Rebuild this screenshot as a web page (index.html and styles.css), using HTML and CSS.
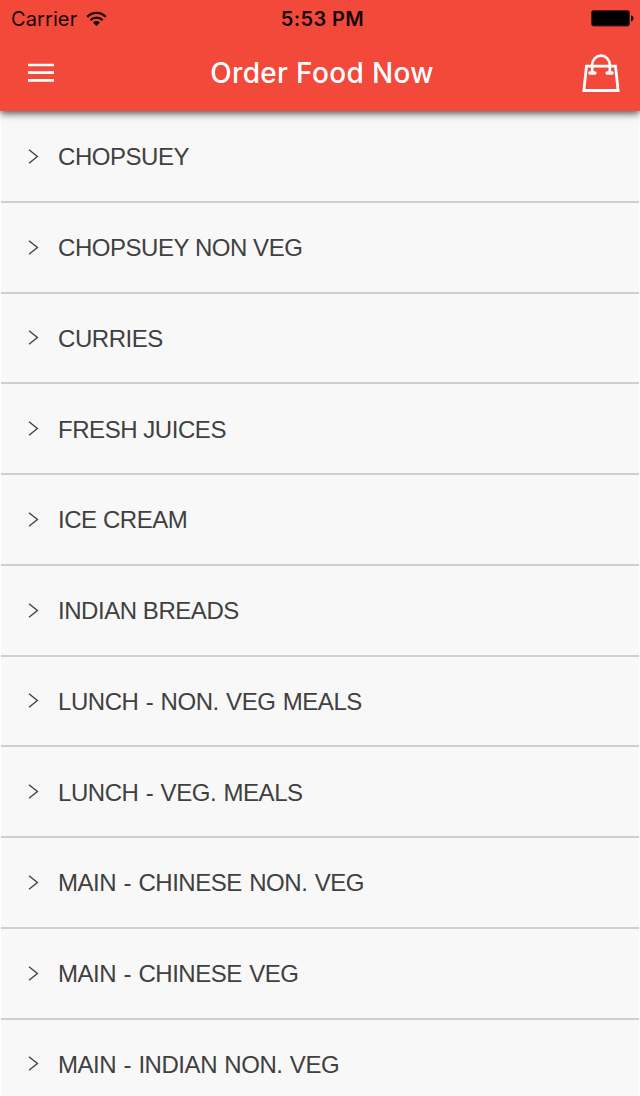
FILE: index.html
```html
<!DOCTYPE html>
<html lang="en">
<head>
    <meta charset="UTF-8">
    <meta name="viewport" content="width=device-width, initial-scale=1.0">
    <title>Order Food Now</title>
    <link rel="stylesheet" href="styles.css">
</head>
<body>
    <header class="app-header">
        <div class="status-bar">
            <div class="status-left">
                <span class="carrier">Carrier</span>
                <svg class="wifi" width="21" height="16" viewBox="0 0 22 17">
                    <path d="M1.2 6.2a13.6 13.6 0 0 1 19.6 0M4.6 9.8a8.9 8.9 0 0 1 12.8 0" fill="none" stroke="#150604" stroke-width="2.5"/>
                    <path d="M11 16l-3.7-3.7a5.2 5.2 0 0 1 7.4 0z" fill="#150604"/>
                </svg>
            </div>
            <span class="clock">5:53 PM</span>
            <svg class="battery" width="43" height="17" viewBox="0 0 43 17">
                <rect x=".5" y=".5" width="38" height="15.5" rx="2" fill="#000" stroke="#5c1a15"/>
                <path d="M40 5.2q2.6.8 2.6 3.1t-2.6 3.1z" fill="#000"/>
            </svg>
        </div>
        <div class="nav-bar">
            <button class="icon-btn" aria-label="Menu">
                <svg width="26" height="20" viewBox="0 0 26 20">
                    <path d="M0 2h26M0 9.7h26M0 17.4h26" fill="none" stroke="#fff" stroke-width="2.7"/>
                </svg>
            </button>
            <h1 class="nav-title">Order Food Now</h1>
            <button class="icon-btn" aria-label="Cart">
                <svg width="38" height="40" viewBox="0 0 38 40">
                    <path d="M4.5 13.2h29l2.6 24.3H1.9z" fill="none" stroke="#fff" stroke-width="2.8"/>
                    <path d="M10.2 20v-8.2a8.8 9.2 0 0 1 17.6 0V20" fill="none" stroke="#fff" stroke-width="2.6"/>
                    <path d="M8 20h4.8M25.2 20H30" fill="none" stroke="#fff" stroke-width="3.6" stroke-linecap="round"/>
                </svg>
            </button>
        </div>
    </header>

    <ul class="menu-list">
        <li class="menu-item"><svg class="arrow" viewBox="0 0 11 15"><path d="M1 .8l8.4 6.7L1 14.2"/></svg><span>CHOPSUEY</span></li>
        <li class="menu-item"><svg class="arrow" viewBox="0 0 11 15"><path d="M1 .8l8.4 6.7L1 14.2"/></svg><span>CHOPSUEY NON VEG</span></li>
        <li class="menu-item"><svg class="arrow" viewBox="0 0 11 15"><path d="M1 .8l8.4 6.7L1 14.2"/></svg><span>CURRIES</span></li>
        <li class="menu-item"><svg class="arrow" viewBox="0 0 11 15"><path d="M1 .8l8.4 6.7L1 14.2"/></svg><span>FRESH JUICES</span></li>
        <li class="menu-item"><svg class="arrow" viewBox="0 0 11 15"><path d="M1 .8l8.4 6.7L1 14.2"/></svg><span>ICE CREAM</span></li>
        <li class="menu-item"><svg class="arrow" viewBox="0 0 11 15"><path d="M1 .8l8.4 6.7L1 14.2"/></svg><span>INDIAN BREADS</span></li>
        <li class="menu-item spaced"><svg class="arrow" viewBox="0 0 11 15"><path d="M1 .8l8.4 6.7L1 14.2"/></svg><span>LUNCH - NON. VEG MEALS</span></li>
        <li class="menu-item spaced"><svg class="arrow" viewBox="0 0 11 15"><path d="M1 .8l8.4 6.7L1 14.2"/></svg><span>LUNCH - VEG. MEALS</span></li>
        <li class="menu-item spaced"><svg class="arrow" viewBox="0 0 11 15"><path d="M1 .8l8.4 6.7L1 14.2"/></svg><span>MAIN - CHINESE NON. VEG</span></li>
        <li class="menu-item spaced"><svg class="arrow" viewBox="0 0 11 15"><path d="M1 .8l8.4 6.7L1 14.2"/></svg><span>MAIN - CHINESE VEG</span></li>
        <li class="menu-item spaced"><svg class="arrow" viewBox="0 0 11 15"><path d="M1 .8l8.4 6.7L1 14.2"/></svg><span>MAIN - INDIAN NON. VEG</span></li>
    </ul>
</body>
</html>
```
FILE: styles.css
```css
* {
    box-sizing: border-box;
}
body {
    margin: 0;
    height: 1096px;
    overflow: hidden;
    background: #fff;
    display: flex;
    flex-direction: column;
    font-family: "Liberation Sans", Arial, sans-serif;
}
.app-header {
    flex: none;
    height: 111px;
    background: #f2493b;
    box-shadow: 0 2px 8px rgba(0, 0, 0, 0.75);
    position: relative;
    z-index: 1;
    font-family: Inter, "Liberation Sans", sans-serif;
}
.status-bar {
    height: 37px;
    padding: 0 6px 0 11px;
    display: grid;
    grid-template-columns: 1fr auto 1fr;
    align-items: center;
    color: #150604;
}
.status-left {
    display: flex;
    align-items: center;
    gap: 9px;
}
.carrier {
    font-size: 20px;
    letter-spacing: 0.1px;
}
.wifi {
    display: block;
}
.clock {
    font-size: 20px;
    font-weight: 600;
    letter-spacing: 0.4px;
}
.battery {
    justify-self: end;
}
.nav-bar {
    height: 72px;
    padding: 0 20px 0 28px;
    display: grid;
    grid-template-columns: 1fr auto 1fr;
    align-items: center;
}
.icon-btn {
    padding: 0;
    border: none;
    background: none;
    display: flex;
    cursor: pointer;
}
.icon-btn:last-child {
    justify-self: end;
}
.nav-title {
    margin: 0 4px 0 0;
    font-size: 28px;
    font-weight: 500;
    letter-spacing: 0.35px;
    color: #fff;
}
.menu-list {
    list-style: none;
    margin: 0 1px;
    padding: 1px 0 0;
    background: #f8f8f8;
}
.menu-item {
    height: 90.75px;
    padding-left: 27px;
    border-bottom: 2px solid #cfcfcf;
    display: flex;
    align-items: center;
    gap: 19px;
    font-size: 24px;
    color: #404040;
    letter-spacing: -0.45px;
}
.menu-item span {
    padding-top: 2px;
}
.menu-item.spaced {
    word-spacing: 1.1px;
}
.arrow {
    width: 11px;
    height: 15px;
    fill: none;
    stroke: #444;
    stroke-width: 1.4;
}
```
